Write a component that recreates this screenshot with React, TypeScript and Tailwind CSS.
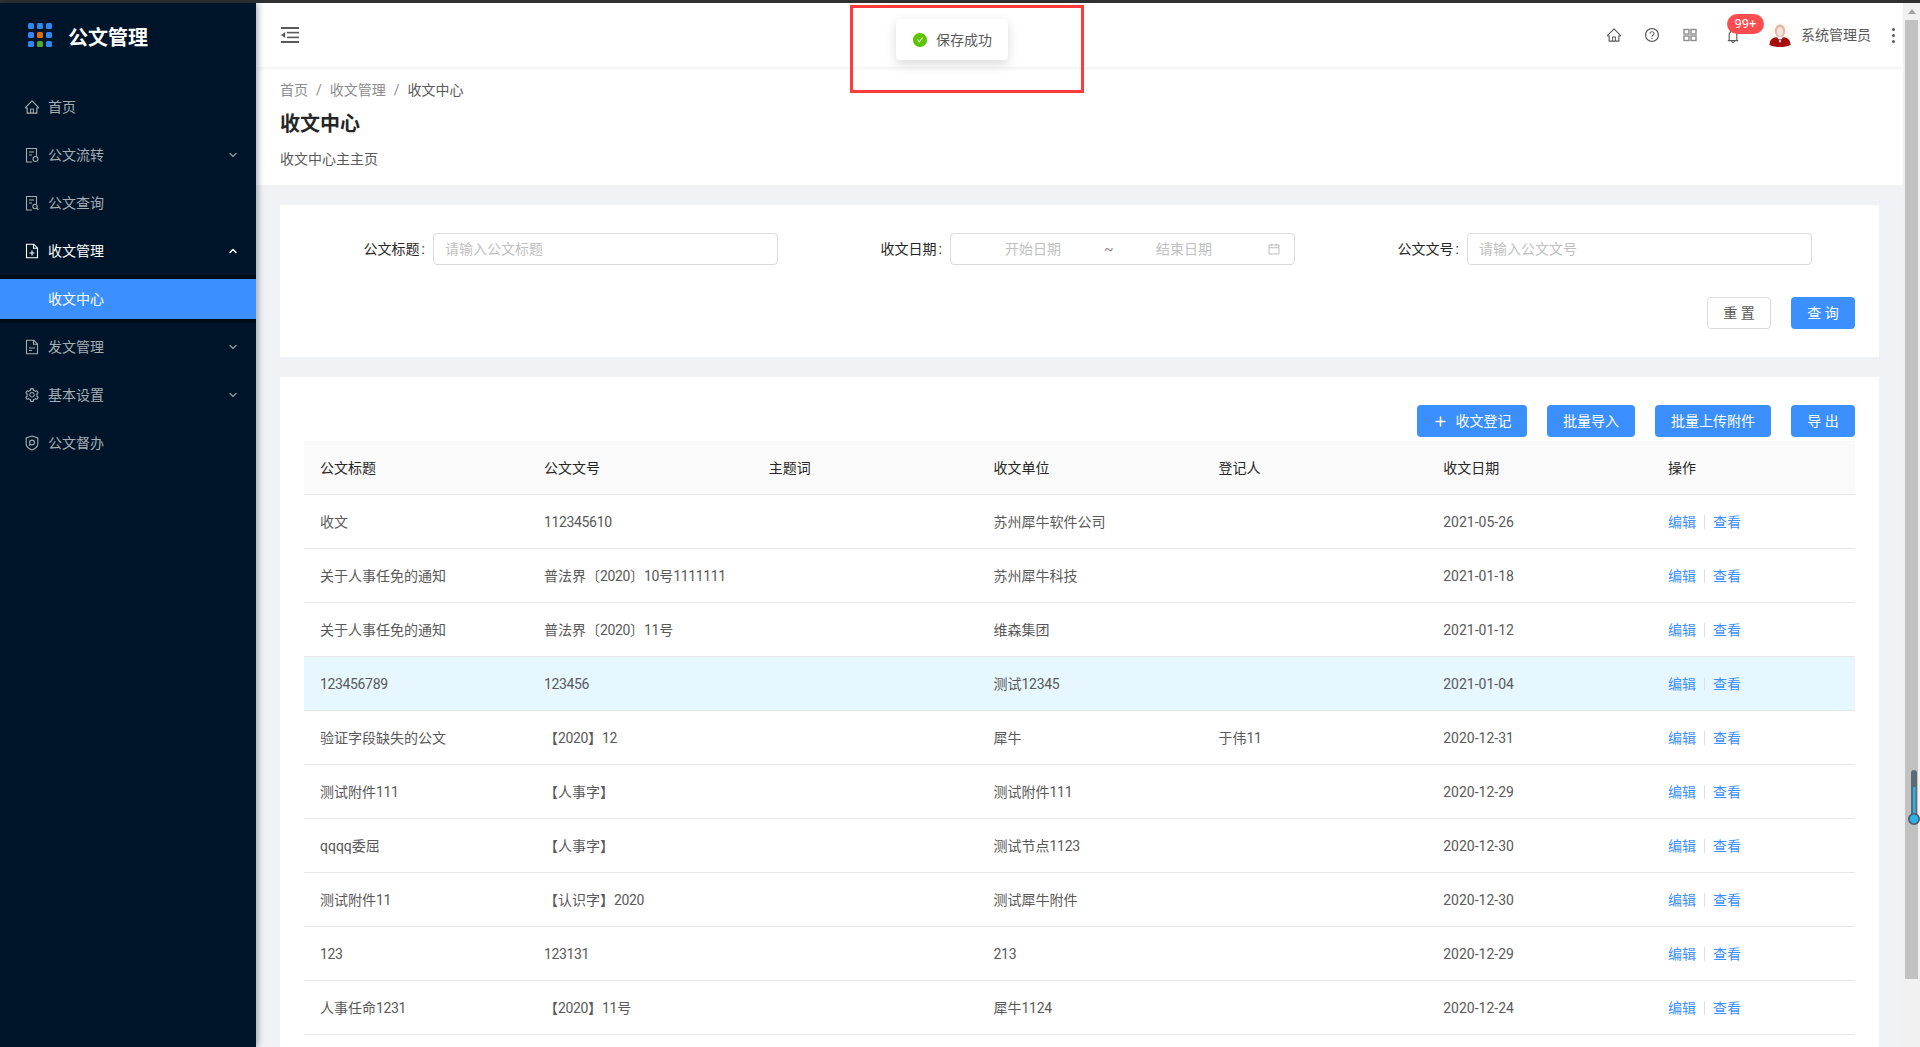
import React from "react";
import { ChevronDown, ChevronUp, Plus } from "lucide-react";
import {
  AiOutlineHome,
  AiOutlineQuestionCircle,
  AiOutlineBell,
  AiOutlineSetting,
  AiFillCheckCircle,
  AiOutlineCalendar,
} from "react-icons/ai";

const Svg = ({ children }: { children: React.ReactNode }) => (
  <svg width="16" height="16" viewBox="0 0 16 16" fill="none" stroke="currentColor" strokeWidth="1.1" className="shrink-0">
    {children}
  </svg>
);

const IconFlow = () => (
  <Svg>
    <path d="M8 15H2.5V1.5h10V9" />
    <path d="M5 5h5M5 8h3" />
    <circle cx="11.5" cy="12" r="2.5" />
  </Svg>
);
const IconSearch = () => (
  <Svg>
    <path d="M8 15H2.5V1.5h10V9" />
    <path d="M5 5h5M5 8h3" />
    <circle cx="11" cy="11.5" r="2.2" />
    <path d="M12.7 13.2l1.6 1.6" />
  </Svg>
);
const IconDocIn = () => (
  <Svg>
    <path d="M2.5 1.2h7.2l3.8 3.8v9.8h-11z" />
    <path d="M9.5 1.2V5.2h4" />
    <path d="M8 7.5v5M5.5 10h5" />
  </Svg>
);
const IconDocOut = () => (
  <Svg>
    <path d="M2.5 1.2h7.2l3.8 3.8v9.8h-11z" />
    <path d="M9.5 1.2V5.2h4" />
    <path d="M5 9h6M5 11.5h3" />
  </Svg>
);
const IconShield = () => (
  <Svg>
    <path d="M8 1l5.8 2v6c0 3-2.8 4.8-5.8 6-3-1.2-5.8-3-5.8-6V3z" />
    <circle cx="8" cy="7.5" r="2.4" />
    <path d="M6.3 9.2L5 10.6" />
  </Svg>
);

const Logo = () => (
  <svg width="24" height="24" viewBox="0 0 24 24" className="shrink-0">
    {[0, 9, 18].map((y) =>
      [0, 9, 18].map((x) => (
        <rect
          key={`${x}-${y}`}
          x={x}
          y={y}
          width="6"
          height="6"
          rx="1.5"
          fill={x === 9 && y === 9 ? "#e8690b" : x === 9 && y === 18 ? "#4fa832" : "#2f88f2"}
        />
      ))
    )}
  </svg>
);

const CollapseIcon = () => (
  <svg width="18" height="16" viewBox="0 0 18 16" fill="#595959">
    <rect x="0" y="0" width="18" height="2" />
    <rect x="6" y="4.8" width="12" height="1.6" />
    <rect x="6" y="9.6" width="12" height="1.6" />
    <rect x="0" y="14" width="18" height="2" />
    <path d="M4.2 5L0 8l4.2 3z" />
  </svg>
);

const Avatar = () => (
  <svg width="24" height="24" viewBox="0 0 24 24" className="shrink-0">
    <circle cx="12" cy="12" r="12" fill="#fdf9ef" />
    <ellipse cx="12" cy="8" rx="5.2" ry="6.5" fill="#dcb5a8" />
    <ellipse cx="12" cy="8.5" rx="3.2" ry="4.6" fill="#f2e3dc" />
    <path d="M1.5 22c0-5 2.5-7 6.5-7.8h8c4 .8 6.5 2.8 6.5 7.8-3 1.5-6.5 2-10.500 2s-7.500-.5-10.500-2z" fill="#a5100f" />
    <path d="M9 13.800h6L12 20z" fill="#f8f2ee" />
    <path d="M10.300 15.800l1.700 1 1.700-1v2l-1.700-.8-1.700.8z" fill="#5a0a0a" />
  </svg>
);

const GridIcon = () => (
  <svg width="14" height="14" viewBox="0 0 14 14" fill="none" stroke="#8c8c8c" strokeWidth="1.4">
    <rect x="1" y="1.5" width="5" height="4.5" />
    <rect x="8" y="1.5" width="5" height="4.5" />
    <rect x="1" y="8" width="5" height="4.5" />
    <rect x="8" y="8" width="5" height="4.5" />
  </svg>
);

const MenuItem = ({
  icon,
  label,
  arrow,
  open,
}: {
  icon: React.ReactNode;
  label: string;
  arrow?: "down" | "up";
  open?: boolean;
}) => (
  <div className={`flex h-10 items-center gap-2 pl-6 pr-[17px] text-sm ${open ? "text-white" : "text-[#a6adb4]"}`}>
    {icon}
    <span className="flex-1">{label}</span>
    {arrow === "down" && <ChevronDown size={12} strokeWidth={3} className="text-[#7f8a95]" />}
    {arrow === "up" && <ChevronUp size={12} strokeWidth={3} className="text-white" />}
  </div>
);

const Sidebar = () => (
  <aside className="relative z-10 flex w-64 shrink-0 flex-col bg-[#001529] shadow-[2px_0_6px_rgba(0,21,41,0.35)]">
    <div className="flex h-[84px] items-start gap-[16px] pl-7 pt-5">
      <Logo />
      <span className="pt-[1px] text-[20px] leading-7 font-bold text-white">公文管理</span>
    </div>
    <nav className="flex flex-col gap-2">
      <MenuItem icon={<AiOutlineHome size={16} />} label="首页" />
      <MenuItem icon={<IconFlow />} label="公文流转" arrow="down" />
      <MenuItem icon={<IconSearch />} label="公文查询" />
      <MenuItem icon={<IconDocIn />} label="收文管理" arrow="up" open />
      <div className="-my-1 bg-[#000c17] py-1">
        <div className="flex h-10 items-center bg-[#3c8fff] pl-12 text-sm text-white">收文中心</div>
      </div>
      <MenuItem icon={<IconDocOut />} label="发文管理" arrow="down" />
      <MenuItem icon={<AiOutlineSetting size={16} />} label="基本设置" arrow="down" />
      <MenuItem icon={<IconShield />} label="公文督办" />
    </nav>
  </aside>
);

const Header = () => (
  <header className="relative z-[5] flex h-16 shrink-0 items-center justify-between bg-white pl-[25px] pr-1 shadow-[0_1px_4px_rgba(0,21,41,0.08)]">
    <CollapseIcon />
    <div className="flex items-center text-[#595959]">
      <div className="flex w-[38px] justify-center">
        <AiOutlineHome size={16} />
      </div>
      <div className="flex w-[38px] justify-center">
        <AiOutlineQuestionCircle size={16} />
      </div>
      <div className="flex w-[38px] justify-center">
        <GridIcon />
      </div>
      <div className="relative ml-[5px] flex w-[38px] justify-center pt-[2px]">
        <AiOutlineBell size={16} />
        <span className="absolute top-[-12px] left-[13px] flex h-5 w-[37px] items-center justify-center rounded-[10px] bg-[#ff4d4f] text-[13px] text-white">
          99+
        </span>
      </div>
      <div className="ml-4">
        <Avatar />
      </div>
      <span className="ml-[9px] text-sm text-[#595959]">系统管理员</span>
      <div className="ml-4 flex w-3 flex-col items-center gap-[3px]">
        <i className="size-[3px] rounded-full bg-[#595959]" />
        <i className="size-[3px] rounded-full bg-[#595959]" />
        <i className="size-[3px] rounded-full bg-[#595959]" />
      </div>
    </div>
  </header>
);

const PageHead = () => (
  <section className="shrink-0 bg-white px-6 pt-3">
    <div className="flex h-[22px] items-center text-sm text-[#8c8c8c]">
      <span>首页</span>
      <span className="mx-2">/</span>
      <span>收文管理</span>
      <span className="mx-2">/</span>
      <span className="text-[#595959]">收文中心</span>
    </div>
    <h1 className="mt-[9px] text-[20px] leading-7 font-bold text-[#262626]">收文中心</h1>
    <p className="mt-[10px] pb-[15px] text-sm leading-[22px] text-[#595959]">收文中心主主页</p>
  </section>
);

const FieldLabel = ({ text }: { text: string }) => (
  <label className="w-[129px] shrink-0 pr-2 text-right text-sm text-[#262626]">
    {text}
    <span className="ml-[2px]">:</span>
  </label>
);

const TextField = ({ label, placeholder }: { label: string; placeholder: string }) => (
  <div className="flex items-center">
    <FieldLabel text={label} />
    <input
      placeholder={placeholder}
      className="h-8 w-[345px] rounded-[4px] border border-[#d9d9d9] bg-white px-[11px] text-sm outline-none placeholder:text-[#bfbfbf]"
    />
  </div>
);

const Search = () => (
  <section className="bg-white px-6 pt-7 pb-7">
    <div className="grid grid-cols-3">
      <TextField label="公文标题" placeholder="请输入公文标题" />
      <div className="flex items-center">
        <FieldLabel text="收文日期" />
        <div className="flex h-8 w-[345px] items-center rounded-[4px] border border-[#d9d9d9] pl-[11px] text-sm text-[#bfbfbf]">
          <input placeholder="开始日期" className="w-[142px] text-center outline-none placeholder:text-[#bfbfbf]" />
          <span className="w-[9px] text-center text-[#8c8c8c]">~</span>
          <input placeholder="结束日期" className="w-[142px] text-center outline-none placeholder:text-[#bfbfbf]" />
          <AiOutlineCalendar size={14} className="ml-[12px]" />
        </div>
      </div>
      <TextField label="公文文号" placeholder="请输入公文文号" />
    </div>
    <div className="mt-8 flex justify-end gap-5">
      <button className="h-8 w-16 rounded-[4px] border border-[#d9d9d9] bg-white text-sm text-[#595959]">重 置</button>
      <button className="h-8 w-16 rounded-[4px] bg-[#3c8fff] text-sm text-white">查 询</button>
    </div>
  </section>
);

const rows: [string, string, string, string, string][] = [
  ["收文", "112345610", "苏州犀牛软件公司", "", "2021-05-26"],
  ["关于人事任免的通知", "普法界〔2020〕10号1111111", "苏州犀牛科技", "", "2021-01-18"],
  ["关于人事任免的通知", "普法界〔2020〕11号", "维森集团", "", "2021-01-12"],
  ["123456789", "123456", "测试12345", "", "2021-01-04"],
  ["验证字段缺失的公文", "【2020】12", "犀牛", "于伟11", "2020-12-31"],
  ["测试附件111", "【人事字】", "测试附件111", "", "2020-12-29"],
  ["qqqq委屈", "【人事字】", "测试节点1123", "", "2020-12-30"],
  ["测试附件11", "【认识字】2020", "测试犀牛附件", "", "2020-12-30"],
  ["123", "123131", "213", "", "2020-12-29"],
  ["人事任命1231", "【2020】11号", "犀牛1124", "", "2020-12-24"],
];

const headers = ["公文标题", "公文文号", "主题词", "收文单位", "登记人", "收文日期", "操作"];

const Digits = ({ text }: { text: string }) => (
  <>
    {text.split(/(\d+)/).map((part, i) =>
      i % 2 === 1 ? (
        <span key={i} className="tracking-[-0.35px]">
          {part}
        </span>
      ) : (
        part
      )
    )}
  </>
);

const Primary = ({ children, className = "" }: { children: React.ReactNode; className?: string }) => (
  <button className={`flex h-8 items-center justify-center rounded-[4px] bg-[#3c8fff] text-sm text-white ${className}`}>
    {children}
  </button>
);

const cell = "border-b border-[#e8e8e8] px-4";

const DataTable = () => (
  <section className="flex-1 bg-white px-6 pt-7">
    <div className="mb-1 flex justify-end gap-5">
      <Primary className="w-[110px] gap-2">
        <Plus size={15} strokeWidth={2.5} />
        收文登记
      </Primary>
      <Primary className="w-[88px]">批量导入</Primary>
      <Primary className="w-[116px]">批量上传附件</Primary>
      <Primary className="w-16">导 出</Primary>
    </div>
    <table className="w-full table-fixed border-separate border-spacing-0 text-sm">
      <thead>
        <tr className="h-[54px] bg-[#fafafa] text-[#262626]">
          {headers.map((h, i) => (
            <th key={h} className={`${cell} text-left font-normal ${i === 0 ? "w-[224px]" : i < 6 ? "w-[224.8px]" : ""}`}>
              {h}
            </th>
          ))}
        </tr>
      </thead>
      <tbody className="text-[#595959]">
        {rows.map((r, i) => (
          <tr key={i} className={`h-[54px] ${i === 3 ? "bg-[#e6f7ff]" : ""}`}>
            <td className={cell}>
              <Digits text={r[0]} />
            </td>
            <td className={cell}>
              <Digits text={r[1]} />
            </td>
            <td className={cell}></td>
            <td className={cell}>
              <Digits text={r[2]} />
            </td>
            <td className={cell}>
              <Digits text={r[3]} />
            </td>
            <td className={cell}>{r[4]}</td>
            <td className={cell}>
              <div className="flex items-center text-[#3c8fff]">
                <span>编辑</span>
                <i className="mx-2 h-[14px] w-px bg-[#e0e0e0]" />
                <span>查看</span>
              </div>
            </td>
          </tr>
        ))}
      </tbody>
    </table>
  </section>
);

const Scrollbar = () => (
  <div className="relative flex w-[17px] shrink-0 flex-col items-center bg-[#f1f1f1]">
    <div className="flex h-[17px] w-full items-center justify-center">
      <div className="h-0 w-0 border-x-[4px] border-b-[5px] border-x-transparent border-b-[#a3a3a3]" />
    </div>
    <div className="h-[959px] w-[13px] bg-[#c1c1c1]" />
    <svg className="absolute top-[762px] right-0" width="12" height="62" viewBox="0 0 12 62">
      <rect x="3" y="5" width="6" height="50" rx="3" fill="#5b6b76" />
      <rect x="5" y="22" width="2.5" height="32" fill="#2fb0e8" />
      <circle cx="6" cy="54" r="5.2" fill="#2fb0e8" stroke="#4b5b66" strokeWidth="1.6" />
    </svg>
  </div>
);

const Toast = () => (
  <div className="absolute top-[19px] left-[896px] z-30 flex h-[41px] w-[112px] items-center justify-center gap-2 rounded-[4px] bg-white text-sm text-[#595959] shadow-[0_4px_12px_rgba(0,0,0,0.15)]">
    <AiFillCheckCircle size={16} className="text-[#5cc400]" />
    <span>保存成功</span>
  </div>
);

export default function App() {
  return (
    <div className="relative flex h-[1047px] w-[1920px] flex-col overflow-hidden bg-[#f0f2f5] font-['Roboto','Noto_Sans_CJK_SC',sans-serif]">
      <div className="h-[3px] shrink-0 bg-[#303030]" />
      <div className="flex min-h-0 flex-1">
        <Sidebar />
        <main className="flex min-w-0 flex-1 flex-col overflow-hidden">
          <Header />
          <PageHead />
          <div className="flex flex-1 flex-col gap-5 px-6 pt-5">
            <Search />
            <DataTable />
          </div>
        </main>
        <Scrollbar />
      </div>
      <Toast />
      <div className="absolute top-[5px] left-[850px] z-40 h-[88px] w-[234px] border-[3px] border-[#ff3b3b]" />
    </div>
  );
}
